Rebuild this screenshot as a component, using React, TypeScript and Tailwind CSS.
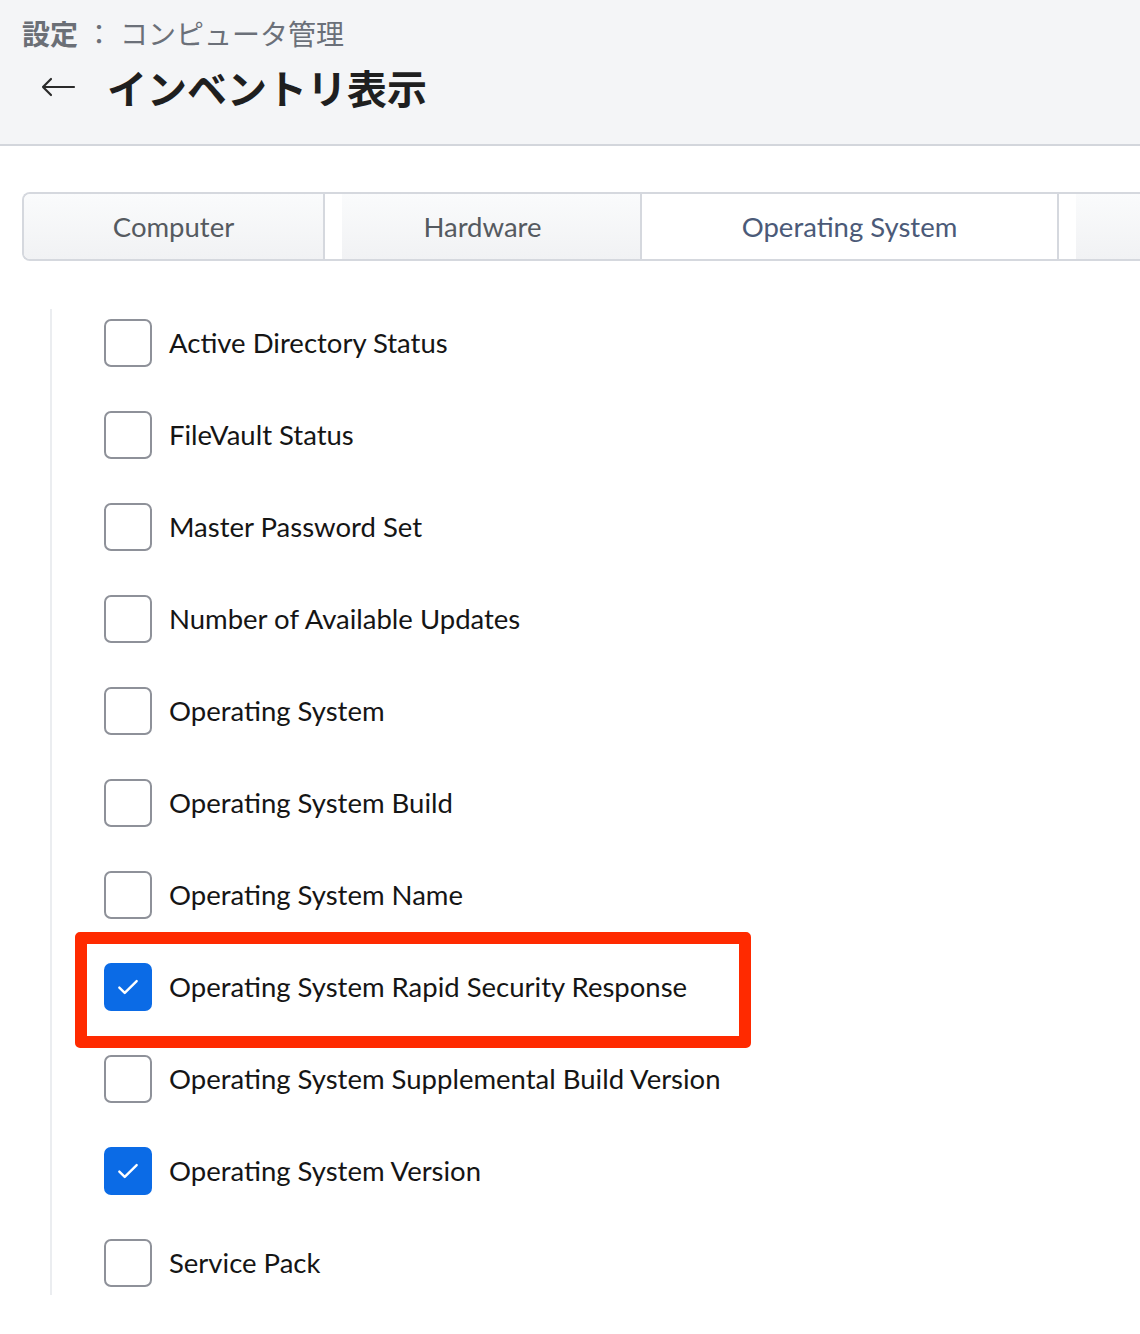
import React from 'react';

const items: { label: string; checked: boolean }[] = [
  { label: 'Active Directory Status', checked: false },
  { label: 'FileVault Status', checked: false },
  { label: 'Master Password Set', checked: false },
  { label: 'Number of Available Updates', checked: false },
  { label: 'Operating System', checked: false },
  { label: 'Operating System Build', checked: false },
  { label: 'Operating System Name', checked: false },
  { label: 'Operating System Rapid Security Response', checked: true },
  { label: 'Operating System Supplemental Build Version', checked: false },
  { label: 'Operating System Version', checked: true },
  { label: 'Service Pack', checked: false },
];

const Checkbox: React.FC<{ checked: boolean }> = ({ checked }) =>
  checked ? (
    <div className="w-12 h-12 rounded-[7px] bg-[#0b6be6] flex items-center justify-center shrink-0">
      <svg width="26" height="26" viewBox="0 0 24 24" fill="none">
        <path d="M4 12.5l5 5L20 6.5" stroke="white" strokeWidth="2.2" strokeLinecap="round" strokeLinejoin="round" />
      </svg>
    </div>
  ) : (
    <div className="w-12 h-12 rounded-[7px] border-2 border-[#8e9199] bg-white shrink-0" />
  );

export default function App() {
  return (
    <div className="w-[1140px] h-[1334px] bg-white overflow-hidden font-['Lato','Noto_Sans_CJK_JP',sans-serif]">
      {/* Header */}
      <div className="h-[146px] bg-[#f4f5f7] border-b-2 border-[#d3d6dc] pl-[22px] pt-[13px]">
        <div className="text-[28px] leading-[40px] text-[#6b7079] font-['Noto_Sans_CJK_JP',sans-serif]">
          <span className="font-bold text-[#6b6f76]">設定</span>
          <span className="mx-[7px]">：</span>
          <span>コンピュータ管理</span>
        </div>
        <div className="flex items-center mt-[9px] h-[50px]">
          <svg width="36" height="20" viewBox="0 0 36 20" fill="none" className="ml-[18px]">
            <path d="M34 10H3M11 2L3 10l8 8" stroke="#2a2a2a" strokeWidth="2.2" strokeLinecap="round" strokeLinejoin="round" />
          </svg>
          <h1 className="ml-[31px] text-[40px] font-bold text-[#1f1f1f] font-['Noto_Sans_CJK_JP',sans-serif]">
            インベントリ表示
          </h1>
        </div>
      </div>

      {/* Tabs */}
      <div className="pl-[22px] pt-[46px]">
        <div className="flex h-[69px] border-2 border-r-0 border-[#d5d8de] rounded-l-[8px] overflow-hidden text-[27.5px]">
          <div className="w-[301px] flex items-center justify-center bg-gradient-to-b from-[#fafbfc] to-[#f1f2f4] text-[#555a60] border-r-2 border-[#d5d8de]">
            Computer
          </div>
          <div className="w-[317px] flex bg-white border-r-2 border-[#d5d8de]">
            <div className="w-[17px]" />
            <div className="flex-1 flex items-center justify-center bg-gradient-to-b from-[#fafbfc] to-[#f1f2f4] text-[#555a60] pr-[17px]">
              Hardware
            </div>
          </div>
          <div className="w-[417px] flex items-center justify-center bg-white text-[#4b5a78] border-r-2 border-[#d5d8de]">
            Operating System
          </div>
          <div className="flex-1 flex bg-white">
            <div className="w-[17px]" />
            <div className="flex-1 bg-gradient-to-b from-[#fafbfc] to-[#f1f2f4]" />
          </div>
        </div>
      </div>

      {/* List */}
      <div className="relative flow-root ml-[50px] mt-[48px] border-l-2 border-[#ebedf0] pl-[52px] h-[986px]">
        <div className="-mt-[12px]">
          {items.map((item) => (
            <div key={item.label} className="flex items-center h-[92px]">
              <Checkbox checked={item.checked} />
              <span className="ml-[17px] text-[27.5px] text-[#151515] whitespace-nowrap">{item.label}</span>
            </div>
          ))}
        </div>
        <div className="absolute left-[23px] top-[623px] w-[676px] h-[116px] border-[12px] border-[#ff2a00] rounded-[5px] pointer-events-none" />
      </div>
    </div>
  );
}
